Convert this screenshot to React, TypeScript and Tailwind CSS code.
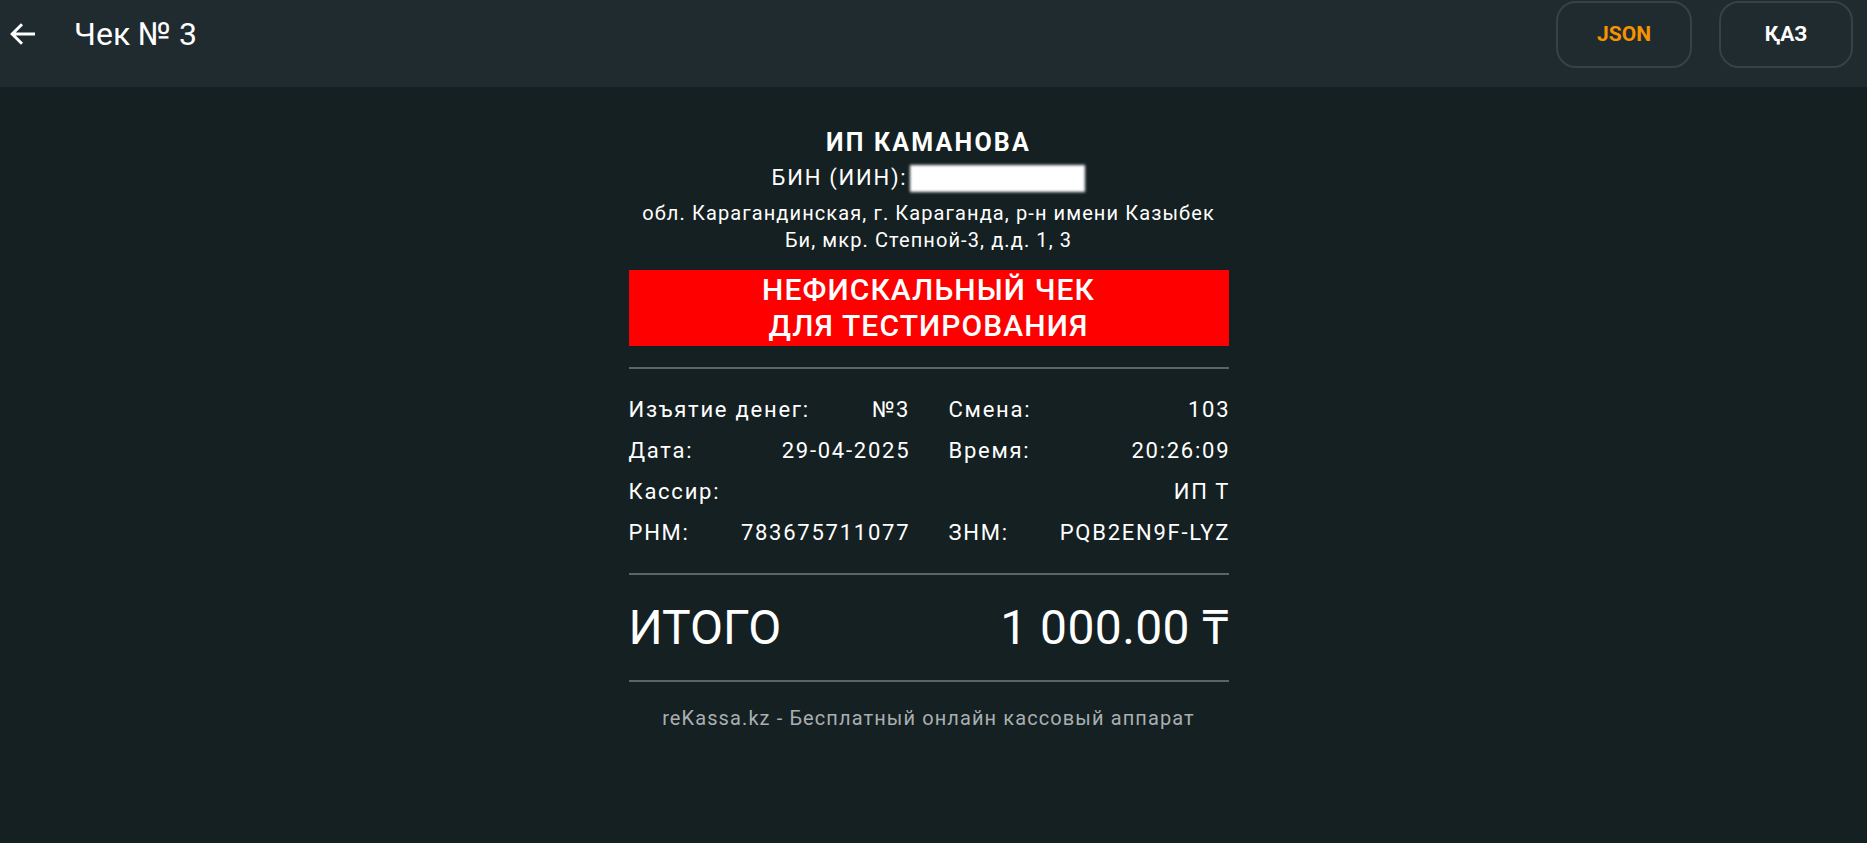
import React from "react";

type RowProps = { l1: string; v1: string; l2: string; v2: string };

const rows: RowProps[] = [
  { l1: "Изъятие денег:", v1: "№3", l2: "Смена:", v2: "103" },
  { l1: "Дата:", v1: "29-04-2025", l2: "Время:", v2: "20:26:09" },
];

function Row({ l1, v1, l2, v2 }: RowProps) {
  return (
    <div className="grid grid-cols-2 gap-x-[40px] h-[41px] items-center">
      <div className="flex justify-between">
        <span>{l1}</span>
        <span className="-mr-[1.75px]">{v1}</span>
      </div>
      <div className="flex justify-between">
        <span>{l2}</span>
        <span className="-mr-[1.75px]">{v2}</span>
      </div>
    </div>
  );
}

export default function App() {
  return (
    <div
      className="min-h-[843px] w-full bg-[#152022] text-white"
      style={{ fontFamily: "Roboto, 'Noto Sans', sans-serif" }}
    >
      <header className="h-[87px] bg-[#1f2b2f]">
        <div className="h-[68px] flex items-center pl-[9px] pr-[14px]">
          <svg width="27" height="24" viewBox="0 0 27 24" className="shrink-0">
            <path d="M26 12H3.5M13 2.2L3.2 12L13 21.8" fill="none" stroke="#ffffff" strokeWidth="3" />
          </svg>
          <h1 className="ml-[38px] text-[32px] leading-none font-normal">Чек № 3</h1>
          <div className="ml-auto flex gap-[27px] self-start mt-[1px]">
            <button className="w-[136px] h-[67px] rounded-[20px] border-2 border-[#374245] text-[#f59300] font-bold text-[21px]">
              JSON
            </button>
            <button className="w-[134px] h-[67px] rounded-[20px] border-2 border-[#374245] text-white font-bold text-[21px]">
              ҚАЗ
            </button>
          </div>
        </div>
      </header>

      <main className="pt-[39px] pr-[10px] flex justify-center">
        <div className="w-[600px]">
          <div className="text-center">
            <div className="text-[25px] leading-[33px] font-bold tracking-[2.2px]">ИП КАМАНОВА</div>
            <div className="mt-[5px] text-[22px] leading-[28px] tracking-[1.75px] flex justify-center items-center">
              <span>БИН (ИИН):</span>
              <span className="ml-[3px] inline-block w-[175px] h-[27px] bg-white blur-[1.5px]" />
            </div>
            <div className="mt-[8px] text-[20px] leading-[27px] tracking-[1.1px]">
              обл. Карагандинская, г. Караганда, р-н имени Казыбек
              <br />
              Би, мкр. Степной-3, д.д. 1, 3
            </div>
            <div className="mt-[16px] bg-[#ff0000] py-[2px] text-[30px] leading-[36px] font-medium tracking-[1.1px]">
              НЕФИСКАЛЬНЫЙ ЧЕК
              <br />
              ДЛЯ ТЕСТИРОВАНИЯ
            </div>
          </div>

          <div className="mt-[21px] h-[2px] bg-[#5d6466]" />

          <div className="mt-[20px] text-[22px] tracking-[1.75px]">
            {rows.map((r) => (
              <Row key={r.l1} {...r} />
            ))}
            <div className="h-[41px] flex items-center justify-between">
              <span>Кассир:</span>
              <span className="-mr-[1.75px]">ИП Т</span>
            </div>
            <Row l1="РНМ:" v1="783675711077" l2="ЗНМ:" v2="PQB2EN9F-LYZ" />
          </div>

          <div className="mt-[20px] h-[2px] bg-[#5d6466]" />

          <div className="mt-[25px] h-[56px] flex items-center justify-between text-[48px]">
            <span>ИТОГО</span>
            <span className="tracking-[0.4px] -mr-[0.4px]">1 000.00 ₸</span>
          </div>

          <div className="mt-[24px] h-[2px] bg-[#5d6466]" />

          <div className="mt-[23px] text-center text-[20px] leading-[27px] tracking-[1.1px] text-[#a9afb1]">
            reKassa.kz - Бесплатный онлайн кассовый аппарат
          </div>
        </div>
      </main>
    </div>
  );
}
